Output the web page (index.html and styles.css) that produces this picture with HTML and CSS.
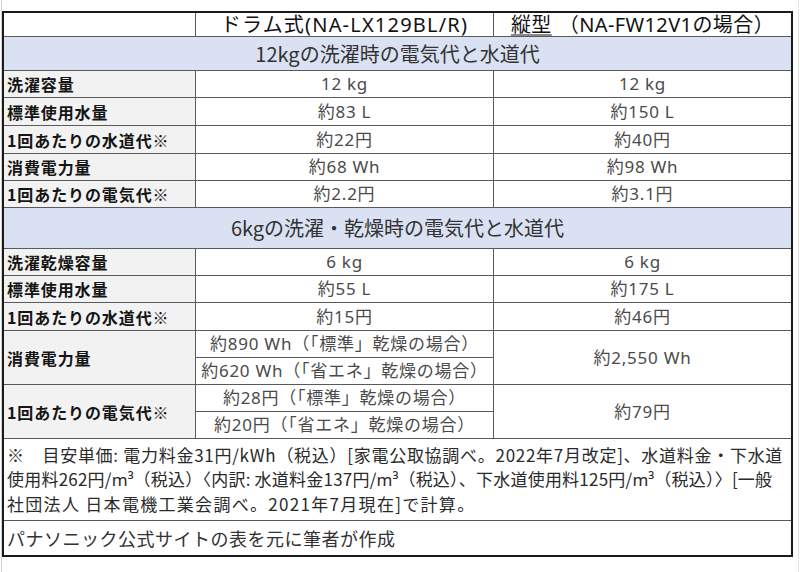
FILE: index.html
```html
<!DOCTYPE html>
<html lang="ja">
<head>
<meta charset="utf-8">
<title>電気代と水道代の比較</title>
<link rel="stylesheet" href="styles.css">
</head>
<body>
<div class="page">
  <div class="cmp">
    <div class="cell blank"></div>
    <div class="cell hd hd-drum">ドラム式(NA-LX129BL/R)</div>
    <div class="cell hd hd-tate"><span class="ul">縦型</span><span class="gap"></span>（NA-FW12V1の場合）</div>

    <div class="cell sec">12kgの洗濯時の電気代と水道代</div>

    <div class="cell lbl">洗濯容量</div><div class="cell val">12 kg</div><div class="cell val">12 kg</div>
    <div class="cell lbl">標準使用水量</div><div class="cell val">約83 L</div><div class="cell val">約150 L</div>
    <div class="cell lbl">1回あたりの水道代※</div><div class="cell val">約22円</div><div class="cell val">約40円</div>
    <div class="cell lbl">消費電力量</div><div class="cell val">約68 Wh</div><div class="cell val">約98 Wh</div>
    <div class="cell lbl">1回あたりの電気代※</div><div class="cell val">約2.2円</div><div class="cell val">約3.1円</div>

    <div class="cell sec">6kgの洗濯・乾燥時の電気代と水道代</div>

    <div class="cell lbl">洗濯乾燥容量</div><div class="cell val">6 kg</div><div class="cell val">6 kg</div>
    <div class="cell lbl">標準使用水量</div><div class="cell val">約55 L</div><div class="cell val">約175 L</div>
    <div class="cell lbl">1回あたりの水道代※</div><div class="cell val">約15円</div><div class="cell val">約46円</div>

    <div class="cell lbl span2">消費電力量</div>
    <div class="cell val">約890 Wh（「標準」乾燥の場合）</div>
    <div class="cell val span2">約2,550 Wh</div>
    <div class="cell val">約620 Wh（「省エネ」乾燥の場合）</div>

    <div class="cell lbl span2">1回あたりの電気代※</div>
    <div class="cell val">約28円（「標準」乾燥の場合）</div>
    <div class="cell val span2">約79円</div>
    <div class="cell val">約20円（「省エネ」乾燥の場合）</div>

    <div class="cell note">
      <p class="note-line first">※　目安単価: 電力料金31円/kWh（税込）[家電公取協調べ。2022年7月改定]、水道料金・下水道</p>
      <p class="note-line tight">使用料262円/<span class="u">m³</span>（税込）〈内訳: 水道料金137円/<span class="u">m³</span>（税込）、下水道使用料125円/<span class="u">m³</span>（税込）〉[一般</p>
      <p class="note-line wide">社団法人 日本電機工業会調べ。2021年7月現在]で計算。</p>
    </div>
    <div class="cell src">パナソニック公式サイトの表を元に筆者が作成</div>
  </div>
</div>
</body>
</html>
```

FILE: styles.css
```css
html, body {
  margin: 0;
  padding: 0;
  background: #ffffff;
}

body {
  font-family: "Noto Sans CJK JP", "Noto Sans", sans-serif;
  color: #222;
}

.page {
  box-sizing: border-box;
  width: 798px;
  height: 572px;
  margin-left: 1px;
  padding-top: 11px;
  border-left: 1px solid #d4d4d4;
  border-right: 1px solid #e2e2e2;
}

.cmp {
  display: grid;
  width: 791px;
  box-sizing: border-box;
  grid-template-columns: 191px 297px 297px;
  grid-template-rows:
    23px 33px
    26px 27px 27px 26px 26px
    40px
    26px 26px 27px
    26px 26px 26px 26px
    81px 34px;
  gap: 1px;
  background: #5a5a5a;
  border: 2px solid #1a1a1a;
}

.cell {
  background: #ffffff;
  display: flex;
  align-items: center;
  justify-content: center;
  white-space: nowrap;
  min-width: 0;
}

.span2 { grid-row: span 2; }

.hd {
  font-family: "Noto Sans", "Noto Sans CJK JP", sans-serif;
  font-size: 20px;
  line-height: 22px;
  color: #111;
}

.hd-drum { letter-spacing: 1.2px; }

.hd-tate { letter-spacing: 0.4px; }

.gap {
  display: inline-block;
  width: 7px;
}

.ul {
  text-decoration: underline;
  text-decoration-color: #8a8a8a;
  text-underline-offset: 2px;
}

.sec {
  grid-column: 1 / -1;
  background: #d9e1f2;
  font-size: 20px;
  line-height: 24px;
  color: #333;
}

.lbl {
  justify-content: flex-start;
  padding-left: 3px;
  background: #f2f2f2;
  font-weight: 700;
  font-size: 16px;
  letter-spacing: 0.9px;
  line-height: 20px;
  color: #151515;
}

.val {
  font-family: "Noto Sans", "Noto Sans CJK JP", sans-serif;
  font-size: 17px;
  letter-spacing: 0.75px;
  line-height: 20px;
  color: #4a4a4a;
}

.note {
  grid-column: 1 / -1;
  flex-direction: column;
  align-items: flex-start;
  justify-content: center;
  padding: 0 3px;
  font-size: 17px;
  line-height: 24px;
  color: #2a2a2a;
}

.note-line {
  margin: 0;
}

.first { letter-spacing: 0.72px; }

.wide { letter-spacing: 1.3px; }

.tight { letter-spacing: 0.22px; }

.u {
  font-family: "Noto Sans", sans-serif;
  letter-spacing: 0;
}

.src {
  grid-column: 1 / -1;
  justify-content: flex-start;
  padding-left: 3px;
  font-size: 18px;
  line-height: 24px;
  letter-spacing: 0.5px;
  color: #333;
}
```
